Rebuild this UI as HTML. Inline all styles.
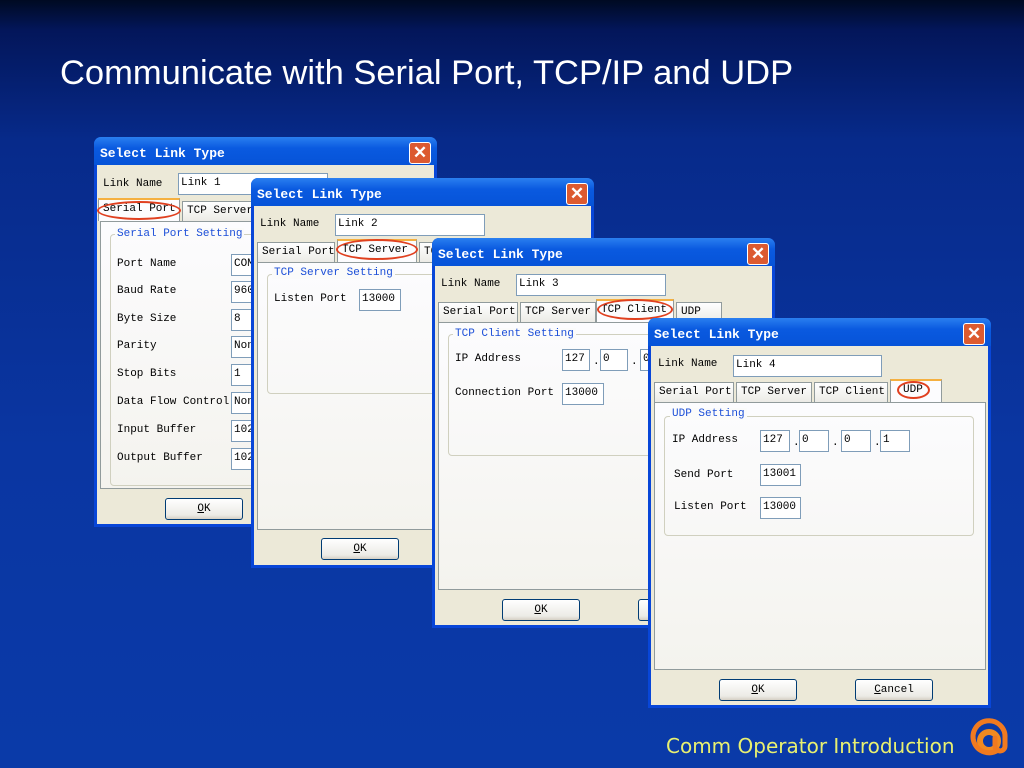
<!DOCTYPE html>
<html><head><meta charset="utf-8"><style>
*{margin:0;padding:0;box-sizing:border-box}
body{width:1024px;height:768px;overflow:hidden;position:relative;background:linear-gradient(#000a22 0px,#03165a 30px,#072a8a 140px,#0a36a2 450px,#0a3aa8 768px);font-family:"Liberation Mono",monospace}
h1{position:absolute;left:60px;top:54px;font:34.5px "Liberation Sans",sans-serif;color:#fff;white-space:nowrap}
.dl{position:absolute;width:343px;height:390px;background:#0846d8;border-radius:7px 7px 0 0;overflow:hidden}
.tt{position:absolute;left:0;top:0;width:343px;height:28px;background:linear-gradient(#2a7ff0,#0a5ae0 40%,#0653d8);color:#fff;font:bold 13px "Liberation Mono",monospace;padding:9px 0 0 6px}
.x{position:absolute;left:315px;top:5px;width:22px;height:22px;background:#dc5a30;border:1px solid #fff;border-radius:3px;color:#fff;font:bold 17px "Liberation Sans",sans-serif;text-align:center;line-height:19px}
.bd{position:absolute;left:3px;top:28px;width:337px;height:359px;background:#ece9d8}
.a{position:absolute;font-size:11px;color:#000;white-space:nowrap}
.in{position:absolute;background:#fff;border:1px solid #7f9db9;font-size:11px;padding:3px 2px;height:22px;white-space:nowrap;overflow:hidden}
.tab{position:absolute;top:64px;height:20px;background:linear-gradient(#fff,#ecebe6);border:1px solid #919b9c;border-bottom:none;font-size:11px;padding:3px 4px;white-space:nowrap}
.tab.s{top:61px;height:23px;border-top:2px solid #f5b040;background:#fcfcfe}
.pn{position:absolute;left:6px;top:84px;width:332px;height:268px;background:linear-gradient(#fcfcfe,#f4f3ee);border:1px solid #919b9c}
.gb{position:absolute;border:1px solid #d0d0bf;border-radius:4px}
.gt{position:absolute;font-size:11px;color:#1c4fd8;background:#fbfbfa;padding:0 2px;white-space:nowrap}
.bt{position:absolute;top:361px;width:78px;height:22px;border:1px solid #003c74;border-radius:3px;background:linear-gradient(#fff,#ecebe6 80%,#d6d0c5);font-size:11px;text-align:center;line-height:20px}
.ov{position:absolute;border:2px solid #e04020;border-radius:50%}
.dot{position:absolute;font-size:11px}
</style></head><body>
<h1>Communicate with Serial Port, TCP/IP and UDP</h1>

<!-- D1 -->
<div class="dl" style="left:94px;top:137px">
<div class="tt">Select Link Type</div><div class="x">✕</div>
<div class="bd"></div>
<div class="a" style="left:9px;top:41px">Link Name</div>
<div class="in" style="left:84px;top:36px;width:150px">Link 1</div>
<div class="pn"></div>
<div class="tab s" style="left:4px;width:82px">Serial Port</div>
<div class="tab" style="left:88px;width:80px">TCP Server</div>
<div class="ov" style="left:3px;top:64px;width:84px;height:19px"></div>
<div class="gb" style="left:16px;top:97px;width:310px;height:252px"></div>
<div class="gt" style="left:21px;top:91px">Serial Port Setting</div>
<div class="a" style="left:23px;top:121px">Port Name</div><div class="in" style="left:137px;top:117px;width:60px">COM1</div>
<div class="a" style="left:23px;top:148px">Baud Rate</div><div class="in" style="left:137px;top:144px;width:60px">9600</div>
<div class="a" style="left:23px;top:176px">Byte Size</div><div class="in" style="left:137px;top:172px;width:60px">8</div>
<div class="a" style="left:23px;top:203px">Parity</div><div class="in" style="left:137px;top:199px;width:60px">None</div>
<div class="a" style="left:23px;top:231px">Stop Bits</div><div class="in" style="left:137px;top:227px;width:60px">1</div>
<div class="a" style="left:23px;top:259px">Data Flow Control</div><div class="in" style="left:137px;top:255px;width:60px">None</div>
<div class="a" style="left:23px;top:287px">Input Buffer</div><div class="in" style="left:137px;top:283px;width:60px">1024</div>
<div class="a" style="left:23px;top:315px">Output Buffer</div><div class="in" style="left:137px;top:311px;width:60px">1024</div>
<div class="bt" style="left:71px"><u>O</u>K</div>
</div>

<!-- D2 -->
<div class="dl" style="left:251px;top:178px">
<div class="tt">Select Link Type</div><div class="x">✕</div>
<div class="bd"></div>
<div class="a" style="left:9px;top:40px">Link Name</div>
<div class="in" style="left:84px;top:36px;width:150px">Link 2</div>
<div class="pn"></div>
<div class="tab" style="left:6px;width:78px">Serial Port</div>
<div class="tab s" style="left:86px;width:80px">TCP Server</div>
<div class="tab" style="left:168px;width:80px">TCP Client</div>
<div class="ov" style="left:85px;top:61px;width:82px;height:21px"></div>
<div class="gb" style="left:16px;top:96px;width:310px;height:120px"></div>
<div class="gt" style="left:21px;top:89px">TCP Server Setting</div>
<div class="a" style="left:23px;top:115px">Listen Port</div><div class="in" style="left:108px;top:111px;width:42px">13000</div>
<div class="bt" style="left:70px;top:360px"><u>O</u>K</div>
</div>

<!-- D3 -->
<div class="dl" style="left:432px;top:238px">
<div class="tt">Select Link Type</div><div class="x">✕</div>
<div class="bd"></div>
<div class="a" style="left:9px;top:40px">Link Name</div>
<div class="in" style="left:84px;top:36px;width:150px">Link 3</div>
<div class="pn"></div>
<div class="tab" style="left:6px;width:80px">Serial Port</div>
<div class="tab" style="left:88px;width:76px">TCP Server</div>
<div class="tab s" style="left:164px;width:78px">TCP Client</div>
<div class="tab" style="left:244px;width:46px">UDP</div>
<div class="ov" style="left:165px;top:61px;width:76px;height:21px"></div>
<div class="gb" style="left:16px;top:96px;width:310px;height:122px"></div>
<div class="gt" style="left:21px;top:90px">TCP Client Setting</div>
<div class="a" style="left:23px;top:115px">IP Address</div>
<div class="in" style="left:130px;top:111px;width:28px">127</div><div class="dot" style="left:161px;top:118px">.</div>
<div class="in" style="left:168px;top:111px;width:28px">0</div><div class="dot" style="left:199px;top:118px">.</div>
<div class="in" style="left:208px;top:111px;width:28px">0</div>
<div class="a" style="left:23px;top:149px">Connection Port</div><div class="in" style="left:130px;top:145px;width:42px">13000</div>
<div class="bt" style="left:70px"><u>O</u>K</div>
<div class="bt" style="left:206px"><u>C</u>ancel</div>
</div>

<!-- D4 -->
<div class="dl" style="left:648px;top:318px">
<div class="tt">Select Link Type</div><div class="x">✕</div>
<div class="bd"></div>
<div class="a" style="left:10px;top:40px">Link Name</div>
<div class="in" style="left:85px;top:37px;width:149px">Link 4</div>
<div class="pn"></div>
<div class="tab" style="left:6px;width:80px">Serial Port</div>
<div class="tab" style="left:88px;width:76px">TCP Server</div>
<div class="tab" style="left:166px;width:74px">TCP Client</div>
<div class="tab s" style="left:242px;width:52px;padding-left:12px">UDP</div>
<div class="ov" style="left:249px;top:63px;width:33px;height:18px"></div>
<div class="gb" style="left:16px;top:98px;width:310px;height:120px"></div>
<div class="gt" style="left:22px;top:90px">UDP Setting</div>
<div class="a" style="left:24px;top:116px">IP Address</div>
<div class="in" style="left:112px;top:112px;width:30px">127</div><div class="dot" style="left:145px;top:119px">.</div>
<div class="in" style="left:151px;top:112px;width:30px">0</div><div class="dot" style="left:184px;top:119px">.</div>
<div class="in" style="left:193px;top:112px;width:30px">0</div><div class="dot" style="left:226px;top:119px">.</div>
<div class="in" style="left:232px;top:112px;width:30px">1</div>
<div class="a" style="left:26px;top:151px">Send Port</div><div class="in" style="left:112px;top:146px;width:41px">13001</div>
<div class="a" style="left:26px;top:183px">Listen Port</div><div class="in" style="left:112px;top:179px;width:41px">13000</div>
<div class="bt" style="left:71px"><u>O</u>K</div>
<div class="bt" style="left:207px"><u>C</u>ancel</div>
</div>

<div style="position:absolute;left:666px;top:734px;font:20px 'DejaVu Sans',sans-serif;color:#e8f070;white-space:nowrap">Comm Operator Introduction</div>
<svg style="position:absolute;left:964px;top:716px" width="50" height="50" viewBox="0 0 50 50">
<circle cx="25" cy="25" r="9" fill="none" stroke="#f08a20" stroke-width="6"/>
<path d="M34 34 A16 16 0 1 1 41 22 L41 30 A5 5 0 0 1 31 30 L31 22" fill="none" stroke="#f07a20" stroke-width="5" stroke-linecap="round"/>
</svg>
</body></html>
